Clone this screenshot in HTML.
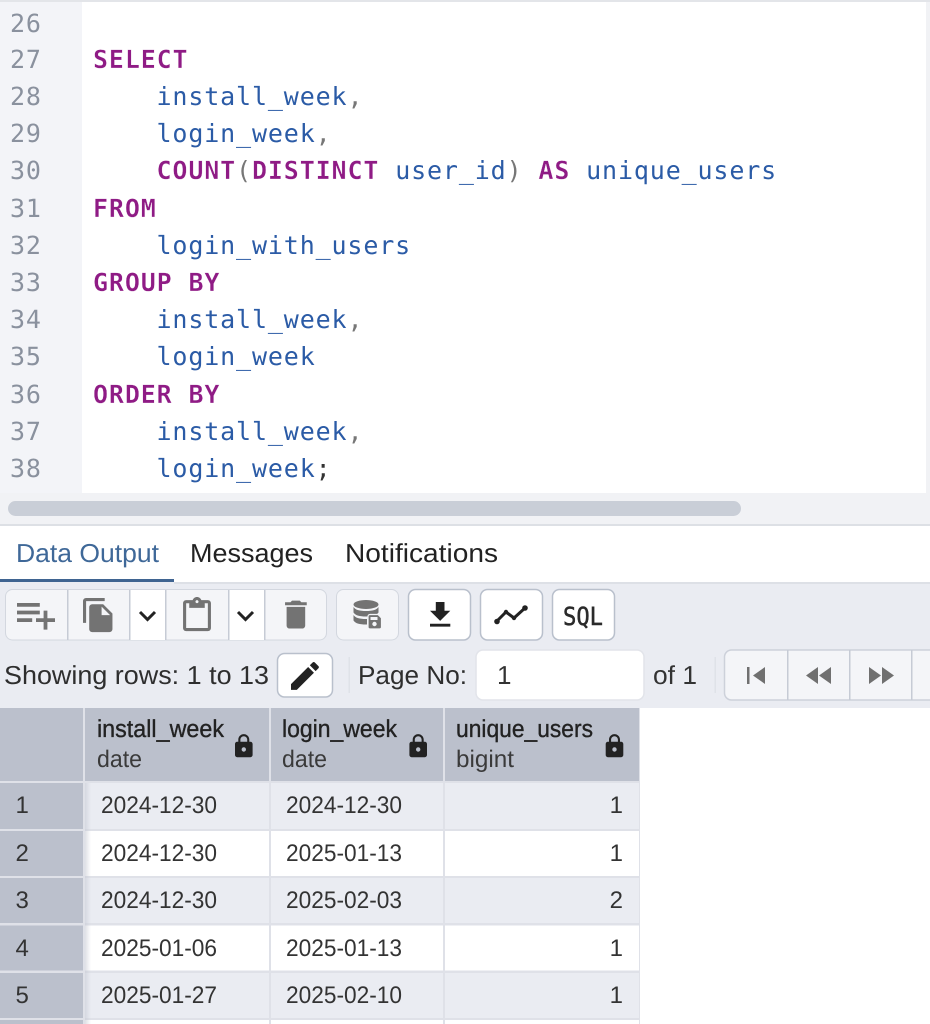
<!DOCTYPE html>
<html><head><meta charset="utf-8"><title>Query results</title>
<style>
html,body{margin:0;padding:0;background:#fff;width:930px;height:1024px;overflow:hidden}
svg{display:block;text-rendering:geometricPrecision;filter:blur(.25px)}
.c{font-family:"DejaVu Sans Mono","Liberation Mono",monospace;font-size:25px;letter-spacing:.86px}
.n{fill:#8a919e}
.k{fill:#8f1b85;font-weight:700;stroke:#fff;stroke-width:.3px}
.i{fill:#2b5ba6}
.p{fill:#777}
.u{font-family:"Liberation Sans",sans-serif;font-size:26px;fill:#2b2b2b}
.h{font-family:"Liberation Sans",sans-serif;font-size:24.5px;fill:#222;stroke:#222;stroke-width:.35px}
.t{font-family:"Liberation Sans",sans-serif;font-size:24px;fill:#3a3a3a}
.d{font-family:"Liberation Sans",sans-serif;font-size:24px;fill:#333}
</style></head>
<body>
<svg width="930" height="1024" viewBox="0 0 930 1024" xmlns="http://www.w3.org/2000/svg">
<defs><linearGradient id="sh" x1="0" x2="1" y1="0" y2="0"><stop offset="0" stop-color="#c4c8d2" stop-opacity=".55"/><stop offset="1" stop-color="#c4c8d2" stop-opacity="0"/></linearGradient></defs>
<rect width="930" height="1024" fill="#fff"/>
<!-- editor -->
<rect width="930" height="2" fill="#e3e5e9"/>
<rect y="2" width="82" height="491" fill="#f3f4f8"/>
<rect x="926" y="2" width="4" height="491" fill="#f1f2f5"/>
<rect y="493" width="930" height="31" fill="#f1f2f5"/>
<rect x="8" y="501" width="733" height="15" rx="7.5" fill="#c9ced7"/>
<rect y="524" width="930" height="2" fill="#dde0e5"/>
<g class="c">
<text class="n" x="10" y="32">26</text>
<text class="n" x="10" y="68">27</text>
<text class="n" x="10" y="105">28</text>
<text class="n" x="10" y="142">29</text>
<text class="n" x="10" y="179">30</text>
<text class="n" x="10" y="217">31</text>
<text class="n" x="10" y="254">32</text>
<text class="n" x="10" y="291">33</text>
<text class="n" x="10" y="328">34</text>
<text class="n" x="10" y="365">35</text>
<text class="n" x="10" y="403">36</text>
<text class="n" x="10" y="440">37</text>
<text class="n" x="10" y="477">38</text>
<text class="k" x="93" y="68">SELECT</text>
<text x="156.5" y="105"><tspan class="i">install_week</tspan><tspan class="p">,</tspan></text>
<text x="156.5" y="142"><tspan class="i">login_week</tspan><tspan class="p">,</tspan></text>
<text x="156.5" y="179"><tspan class="k">COUNT</tspan><tspan class="p">(</tspan><tspan class="k">DISTINCT</tspan><tspan class="i"> user_id</tspan><tspan class="p">)</tspan><tspan class="k"> AS</tspan><tspan class="i"> unique_users</tspan></text>
<text class="k" x="93" y="217">FROM</text>
<text class="i" x="156.5" y="254">login_with_users</text>
<text class="k" x="93" y="291">GROUP BY</text>
<text x="156.5" y="328"><tspan class="i">install_week</tspan><tspan class="p">,</tspan></text>
<text class="i" x="156.5" y="365">login_week</text>
<text class="k" x="93" y="403">ORDER BY</text>
<text x="156.5" y="440"><tspan class="i">install_week</tspan><tspan class="p">,</tspan></text>
<text x="156.5" y="477"><tspan class="i">login_week</tspan><tspan fill="#333">;</tspan></text>
</g>
<!-- tabs -->
<rect y="526" width="930" height="56" fill="#fff"/>
<text class="u" x="16" y="562" textLength="143" lengthAdjust="spacingAndGlyphs" style="fill:#3f6898">Data Output</text>
<text class="u" x="190" y="562" textLength="123" lengthAdjust="spacingAndGlyphs" style="fill:#222">Messages</text>
<text class="u" x="345" y="562" textLength="153" lengthAdjust="spacingAndGlyphs" style="fill:#222">Notifications</text>
<rect y="579" width="174" height="3" fill="#3f6491"/>
<!-- toolbar bg -->
<rect y="582" width="930" height="126" fill="#eaecf2"/>
<rect y="582" x="174" width="756" height="2" fill="#dde0e6"/>
<!-- group 1 -->
<rect x="5.5" y="589.5" width="321" height="50.5" rx="7" fill="#f4f5f8" stroke="#d3d7df"/>
<rect x="130" y="590" width="36" height="50" fill="#fff"/>
<rect x="229" y="590" width="35" height="50" fill="#fff"/>
<g fill="#c6cbd5">
<rect x="67" y="590" width="1.5" height="50"/>
<rect x="129" y="590" width="1.5" height="50"/>
<rect x="165" y="590" width="1.5" height="50"/>
<rect x="228" y="590" width="1.5" height="50"/>
<rect x="264" y="590" width="1.5" height="50"/>
</g>
<rect x="336.5" y="589.5" width="62" height="50.5" rx="7" fill="#f4f5f8" stroke="#d3d7df"/>
<g fill="#fff" stroke="#b9c0cc" stroke-width="1.5">
<rect x="408.5" y="589.5" width="62" height="50.5" rx="7"/>
<rect x="480.5" y="589.5" width="62" height="50.5" rx="7"/>
<rect x="552.5" y="589.5" width="62" height="50.5" rx="7"/>
</g>
<!-- toolbar icons -->
<g fill="#737373">
<path transform="translate(13.2 591.6) scale(1.9)" d="M14 10H2v2h12v-2zm0-4H2v2h12V6zm4 8v-4h-2v4h-4v2h4v4h2v-4h4v-2h-4zM2 16h8v-2H2v2z"/>
<path transform="translate(79.9 596.5) scale(1.55)" d="M16 1H4c-1.1 0-2 .9-2 2v14h2V3h12V1zm-1 4l6 6v10c0 1.1-.9 2-2 2H7.99C6.89 23 6 22.1 6 21l.01-14c0-1.1.89-2 1.99-2h7zm-1 7h5.5L14 6.5V12z"/>
<path transform="translate(178.4 597) scale(1.55)" d="M19 2h-4.18C14.4.84 13.3 0 12 0S9.6.84 9.18 2H5c-1.1 0-2 .9-2 2v16c0 1.1.9 2 2 2h14c1.1 0 2-.9 2-2V4c0-1.1-.9-2-2-2zm-7 0c.55 0 1 .45 1 1s-.45 1-1 1-1-.45-1-1 .45-1 1-1zm7 18H5V4h2v3h10V4h2v16z"/>
<path transform="translate(277.3 596) scale(1.55)" d="M6 19c0 1.1.9 2 2 2h8c1.1 0 2-.9 2-2V7H6v12zM19 4h-3.5l-1-1h-5l-1 1H5v2h14V4z"/>
<!-- db -->
<ellipse cx="366" cy="604.5" rx="12.5" ry="4.5"/>
<path d="M353.500 607c2 3 6 4 12.500 4s10.500-1 12.500-4v5.500c-2 3-6 4-12.500 4s-10.500-1-12.500-4z"/>
<path d="M353.500 615c2 3 6 4 12.500 4l1 0v5.500h-1c-6.500 0-10.500-1-12.500-4z"/>
<path d="M370 614.500h8l3.500 3.500v9a2 2 0 0 1-2 2h-9.500a2 2 0 0 1-2-2v-10.500a2 2 0 0 1 2-2z" stroke="#f4f5f8" stroke-width="1.2"/>
<rect x="370.500" y="617" width="7" height="3" fill="#f4f5f8"/>
<circle cx="374.500" cy="624" r="2.200" fill="#f4f5f8"/>
</g>
<g fill="none" stroke="#222" stroke-width="3">
<path d="M140 612l7.500 7.500 7.500-7.500"/>
<path d="M238 612l7.500 7.500 7.500-7.500"/>
</g>
<path fill="#222" transform="translate(422.75 597.65) scale(1.45)" d="M19 9h-4V3H9v6H5l7 7 7-7zM5 18v2h14v-2H5z"/>
<path fill="none" stroke="#222" stroke-width="3" d="M497 621l9-9 8 6 11-10"/>
<g fill="#222"><circle cx="497" cy="621.500" r="2.800"/><circle cx="506" cy="612" r="2.200"/><circle cx="514" cy="618" r="2.200"/><circle cx="525" cy="608" r="2.800"/></g>
<text x="563" y="625" textLength="40" lengthAdjust="spacingAndGlyphs" style="font-family:'DejaVu Sans Mono',monospace;font-size:25px;fill:#2a2a2a;stroke:#2a2a2a;stroke-width:.5px">SQL</text>
<!-- row 2 -->
<text class="u" x="4" y="684" textLength="265" lengthAdjust="spacingAndGlyphs" style="fill:#2e2e2e">Showing rows: 1 to 13</text>
<rect x="277.500" y="653.500" width="55" height="43.500" rx="7" fill="#fff" stroke="#b9c0cc" stroke-width="1.500"/>
<path fill="#222" transform="translate(286.35 657.35) scale(1.55)" d="M3 17.25V21h3.75L17.81 9.94l-3.750-3.750L3 17.250zM20.710 7.040c.39-.39.39-1.020 0-1.410l-2.340-2.340c-.39-.39-1.020-.39-1.410 0l-1.830 1.830 3.750 3.750 1.830-1.830z"/>
<rect x="348.500" y="657" width="1.500" height="36" fill="#dfe2e8"/>
<text class="u" x="358" y="684" textLength="109" lengthAdjust="spacingAndGlyphs" style="fill:#2e2e2e">Page No:</text>
<rect x="476" y="650" width="168" height="50" rx="7" fill="#fff" stroke="#e2e4ea" stroke-width="1.500"/>
<text class="u" x="497" y="684" style="fill:#333">1</text>
<text class="u" x="653" y="684" textLength="44" lengthAdjust="spacingAndGlyphs" style="fill:#333">of 1</text>
<rect x="714.500" y="657" width="1.500" height="36" fill="#dfe2e8"/>
<rect x="724.500" y="650" width="240" height="50" rx="7" fill="#f4f5f8" stroke="#cdd1da" stroke-width="1.500"/>
<g fill="#c6cbd5"><rect x="787" y="650" width="1.500" height="50"/><rect x="849" y="650" width="1.500" height="50"/><rect x="911" y="650" width="1.500" height="50"/></g>
<g fill="#707070">
<rect x="747" y="667" width="2.500" height="17"/>
<path d="M765 667v17l-12-8.500z"/>
<path d="M818 667v17l-12-8.500zM831 667v17l-12-8.500z"/>
<path d="M869 667v17l12-8.500zM882 667v17l12-8.500z"/>
</g>
<!-- table -->
<rect y="708" width="640" height="316" fill="#dfe1e8"/>
<rect x="640" y="708" width="290" height="316" fill="#fff"/>
<rect y="708" width="83" height="73" fill="#bbc0cc"/>
<rect x="85" y="708" width="184" height="73" fill="#bbc0cc"/>
<rect x="271" y="708" width="172" height="73" fill="#bbc0cc"/>
<rect x="445" y="708" width="194" height="73" fill="#bbc0cc"/>
<text class="h" x="97" y="737" textLength="127" lengthAdjust="spacingAndGlyphs">install_week</text>
<text class="t" x="97" y="767" textLength="45" lengthAdjust="spacingAndGlyphs">date</text>
<text class="h" x="282" y="737" textLength="115" lengthAdjust="spacingAndGlyphs">login_week</text>
<text class="t" x="282" y="767" textLength="45" lengthAdjust="spacingAndGlyphs">date</text>
<text class="h" x="456" y="737" textLength="137" lengthAdjust="spacingAndGlyphs">unique_users</text>
<text class="t" x="456" y="767" textLength="58" lengthAdjust="spacingAndGlyphs">bigint</text>
<g fill="#222">
<path transform="translate(230.600 733) scale(1.100)" d="M18 8h-1V6c0-2.760-2.240-5-5-5S7 3.240 7 6v2H6c-1.100 0-2 .9-2 2v10c0 1.100.9 2 2 2h12c1.100 0 2-.9 2-2V10c0-1.100-.9-2-2-2zm-6 9c-1.100 0-2-.9-2-2s.9-2 2-2 2 .9 2 2-.9 2-2 2zm3.100-9H8.900V6c0-1.710 1.390-3.100 3.100-3.100 1.710 0 3.100 1.390 3.100 3.100v2z"/>
<path transform="translate(405 733) scale(1.100)" d="M18 8h-1V6c0-2.760-2.240-5-5-5S7 3.240 7 6v2H6c-1.100 0-2 .9-2 2v10c0 1.100.9 2 2 2h12c1.100 0 2-.9 2-2V10c0-1.100-.9-2-2-2zm-6 9c-1.100 0-2-.9-2-2s.9-2 2-2 2 .9 2 2-.9 2-2 2zm3.100-9H8.900V6c0-1.710 1.390-3.100 3.100-3.100 1.710 0 3.100 1.390 3.100 3.100v2z"/>
<path transform="translate(601.300 733) scale(1.100)" d="M18 8h-1V6c0-2.760-2.240-5-5-5S7 3.240 7 6v2H6c-1.100 0-2 .9-2 2v10c0 1.100.9 2 2 2h12c1.100 0 2-.9 2-2V10c0-1.100-.9-2-2-2zm-6 9c-1.100 0-2-.9-2-2s.9-2 2-2 2 .9 2 2-.9 2-2 2zm3.100-9H8.900V6c0-1.710 1.390-3.100 3.100-3.100 1.710 0 3.100 1.390 3.100 3.100v2z"/>
</g>
<!-- row cells -->
<g fill="#bbc0cc">
<rect y="783" width="83" height="46"/><rect y="831" width="83" height="45"/><rect y="878" width="83" height="45"/><rect y="925.500" width="83" height="45"/><rect y="973" width="83" height="45"/><rect y="1020" width="83" height="4"/>
</g>
<g fill="#eaecf2">
<rect x="85" y="783" width="184" height="46"/><rect x="271" y="783" width="172" height="46"/><rect x="445" y="783" width="194" height="46"/>
<rect x="85" y="878" width="184" height="45"/><rect x="271" y="878" width="172" height="45"/><rect x="445" y="878" width="194" height="45"/>
<rect x="85" y="973" width="184" height="45"/><rect x="271" y="973" width="172" height="45"/><rect x="445" y="973" width="194" height="45"/>
</g>
<g fill="#fff">
<rect x="85" y="831" width="184" height="45"/><rect x="271" y="831" width="172" height="45"/><rect x="445" y="831" width="194" height="45"/>
<rect x="85" y="925.500" width="184" height="45"/><rect x="271" y="925.500" width="172" height="45"/><rect x="445" y="925.500" width="194" height="45"/>
<rect x="85" y="1020" width="184" height="4"/><rect x="271" y="1020" width="172" height="4"/><rect x="445" y="1020" width="194" height="4"/>
</g>
<rect x="85" y="783" width="6" height="241" fill="url(#sh)"/>
<g>
<text class="d" x="15.500" y="813">1</text><text class="d" x="101" y="813" textLength="116" lengthAdjust="spacingAndGlyphs">2024-12-30</text><text class="d" x="286" y="813" textLength="116" lengthAdjust="spacingAndGlyphs">2024-12-30</text><text class="d" x="623" y="813" text-anchor="end">1</text>
<text class="d" x="15.500" y="861">2</text><text class="d" x="101" y="861" textLength="116" lengthAdjust="spacingAndGlyphs">2024-12-30</text><text class="d" x="286" y="861" textLength="116" lengthAdjust="spacingAndGlyphs">2025-01-13</text><text class="d" x="623" y="861" text-anchor="end">1</text>
<text class="d" x="15.500" y="908">3</text><text class="d" x="101" y="908" textLength="116" lengthAdjust="spacingAndGlyphs">2024-12-30</text><text class="d" x="286" y="908" textLength="116" lengthAdjust="spacingAndGlyphs">2025-02-03</text><text class="d" x="623" y="908" text-anchor="end">2</text>
<text class="d" x="15.500" y="956">4</text><text class="d" x="101" y="956" textLength="116" lengthAdjust="spacingAndGlyphs">2025-01-06</text><text class="d" x="286" y="956" textLength="116" lengthAdjust="spacingAndGlyphs">2025-01-13</text><text class="d" x="623" y="956" text-anchor="end">1</text>
<text class="d" x="15.500" y="1003">5</text><text class="d" x="101" y="1003" textLength="116" lengthAdjust="spacingAndGlyphs">2025-01-27</text><text class="d" x="286" y="1003" textLength="116" lengthAdjust="spacingAndGlyphs">2025-02-10</text><text class="d" x="623" y="1003" text-anchor="end">1</text>
</g>
</svg>
</body></html>
